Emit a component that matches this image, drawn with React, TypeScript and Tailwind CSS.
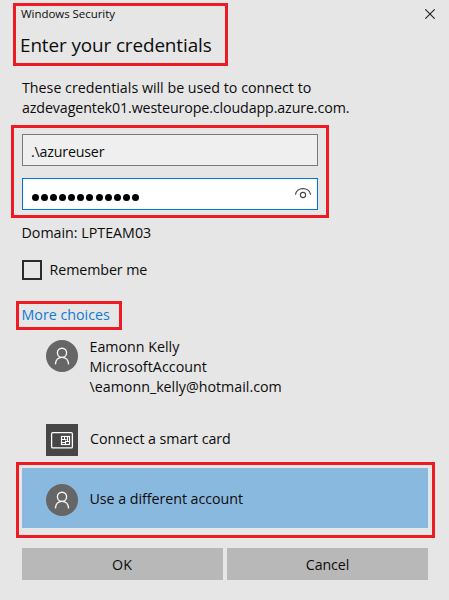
import { useState } from "react";

function PersonIcon() {
  return (
    <span className="flex size-8 shrink-0 items-center justify-center rounded-full bg-[#666666]">
      <svg width="32" height="32" viewBox="0 0 32 32" fill="none" stroke="#f8f8f8" strokeWidth="1.35">
        <circle cx="16" cy="12.8" r="4.6" />
        <path d="M9.4 24.4c.3-4.3 3-7 6.6-7s6.3 2.7 6.6 7" />
      </svg>
    </span>
  );
}

function CardIcon() {
  return (
    <span className="flex size-8 shrink-0 bg-[#464646]">
      <svg width="32" height="32" viewBox="0 0 32 32" fill="none" stroke="#ffffff">
        <rect x="5.6" y="8.6" width="20.8" height="15.3" rx="1.2" strokeWidth="1.3" />
        <rect x="15.5" y="12.5" width="8" height="8" strokeWidth="1.2" />
        <path d="M16 15.5h4.5M18.5 12.5v3M21.5 13v4M16 18.5h3.5M19.5 16.5V20M19.5 17.5H23" />
      </svg>
    </span>
  );
}

function EyeIcon() {
  return (
    <svg width="18" height="12" viewBox="0 0 18 12" fill="none" stroke="#444444" strokeWidth="1.1">
      <path d="M1.5 7.8C1.8 4 5 1.6 9 1.6s7.2 2.4 7.5 6.2" />
      <circle cx="9" cy="8" r="2.6" />
    </svg>
  );
}

export default function App() {
  const [remember, setRemember] = useState(false);

  return (
    <main className="flex h-[600px] w-[449px] flex-col overflow-hidden bg-[#e6e6e6] pt-[3px] font-['Open_Sans','Noto_Sans',sans-serif] text-[14.25px] leading-5 text-[#0c0c0c]">
      <header className="flex items-start justify-between pr-[14px] pl-[13px]">
        <div className="h-[63px] w-[215px] border-3 border-[#ed1c24] pl-1">
          <p className="pl-px text-[11.5px] leading-4 tracking-[-0.05px]">Windows Security</p>
          <h1 className="mt-[10px] text-[18.9px] leading-[26px] tracking-[-0.11px]">Enter your credentials</h1>
        </div>
        <button aria-label="Close" className="mt-[6px]">
          <svg width="10" height="10" viewBox="0 0 10 10" stroke="#222222" strokeWidth="1.1">
            <path d="M.3.3l9.4 9.4M9.7.3L.3 9.7" />
          </svg>
        </button>
      </header>

      <p className="mt-3 ml-[22px] whitespace-nowrap">
        These credentials will be used to connect to
        <br />
        <span className="tracking-[-0.12px]">azdevagentek01.westeurope.cloudapp.azure.com.</span>
      </p>

      <section className="mt-[7px] ml-[11px] flex h-[93px] w-[318px] flex-col gap-3 border-3 border-[#ed1c24] px-2 pt-[6px]">
        <div className="flex h-8 shrink-0 items-center border border-[#7a7a7a] bg-[#efefef] pt-[3px] pl-2 tracking-[-0.2px]">
          .\azureuser
        </div>
        <div className="flex h-8 shrink-0 items-center justify-between border border-[#0078d7] bg-white pr-[5px] pl-[9px]">
          <div className="flex gap-[2.08px] pt-[6px]">
            {Array.from({ length: 12 }, (_, i) => (
              <span key={i} className="size-[7px] rounded-full bg-black" />
            ))}
          </div>
          <span className="-mt-[2px]">
            <EyeIcon />
          </span>
        </div>
      </section>

      <p className="mt-[5px] ml-[21.5px]">Domain: LPTEAM03</p>

      <label className="mt-[17px] ml-[22px] flex h-5 items-center gap-[7.5px] tracking-[-0.08px]">
        <input
          type="checkbox"
          checked={remember}
          onChange={(e) => setRemember(e.target.checked)}
          className="size-5 appearance-none border-2 border-[#2b2b2b] checked:bg-[#0078d7]"
        />
        Remember me
      </label>

      <div className="mt-[21px] ml-4 h-[29px] w-[106px] border-3 border-[#ed1c24] pt-px pl-[2.5px] text-[#0f7ad5]">
        More choices
      </div>

      <div className="mt-[7px] ml-[46px] flex gap-3">
        <span className="mt-[3px]">
          <PersonIcon />
        </span>
        <p className="-ml-[0.5px]">
          Eamonn Kelly
          <br />
          <span className="tracking-[0.05px]">MicrosoftAccount</span>
          <br />
          \eamonn_kelly@hotmail.com
        </p>
      </div>

      <div className="mt-[27px] ml-[46px] flex gap-3">
        <CardIcon />
        <span className="mt-[5px] tracking-[-0.07px]">Connect a smart card</span>
      </div>

      <div className="mt-[6px] ml-4 h-[76px] w-[419px] shrink-0 border-3 border-[#ed1c24] pt-[3px] pl-[3px]">
        <div className="flex h-[60px] w-[406px] items-center gap-3 bg-[#8ab9e0] pt-1 pl-6">
          <PersonIcon />
          <span className="-mt-[3px] -ml-[0.5px] tracking-[-0.04px]">Use a different account</span>
        </div>
      </div>

      <footer className="mt-[10px] ml-[22px] grid w-[406px] grid-cols-2 gap-1">
        <button className="h-8 bg-[#b8b8b8] pt-[2px] pr-px">OK</button>
        <button className="h-8 bg-[#b8b8b8] pt-[2px] tracking-[-0.1px]">Cancel</button>
      </footer>
    </main>
  );
}
